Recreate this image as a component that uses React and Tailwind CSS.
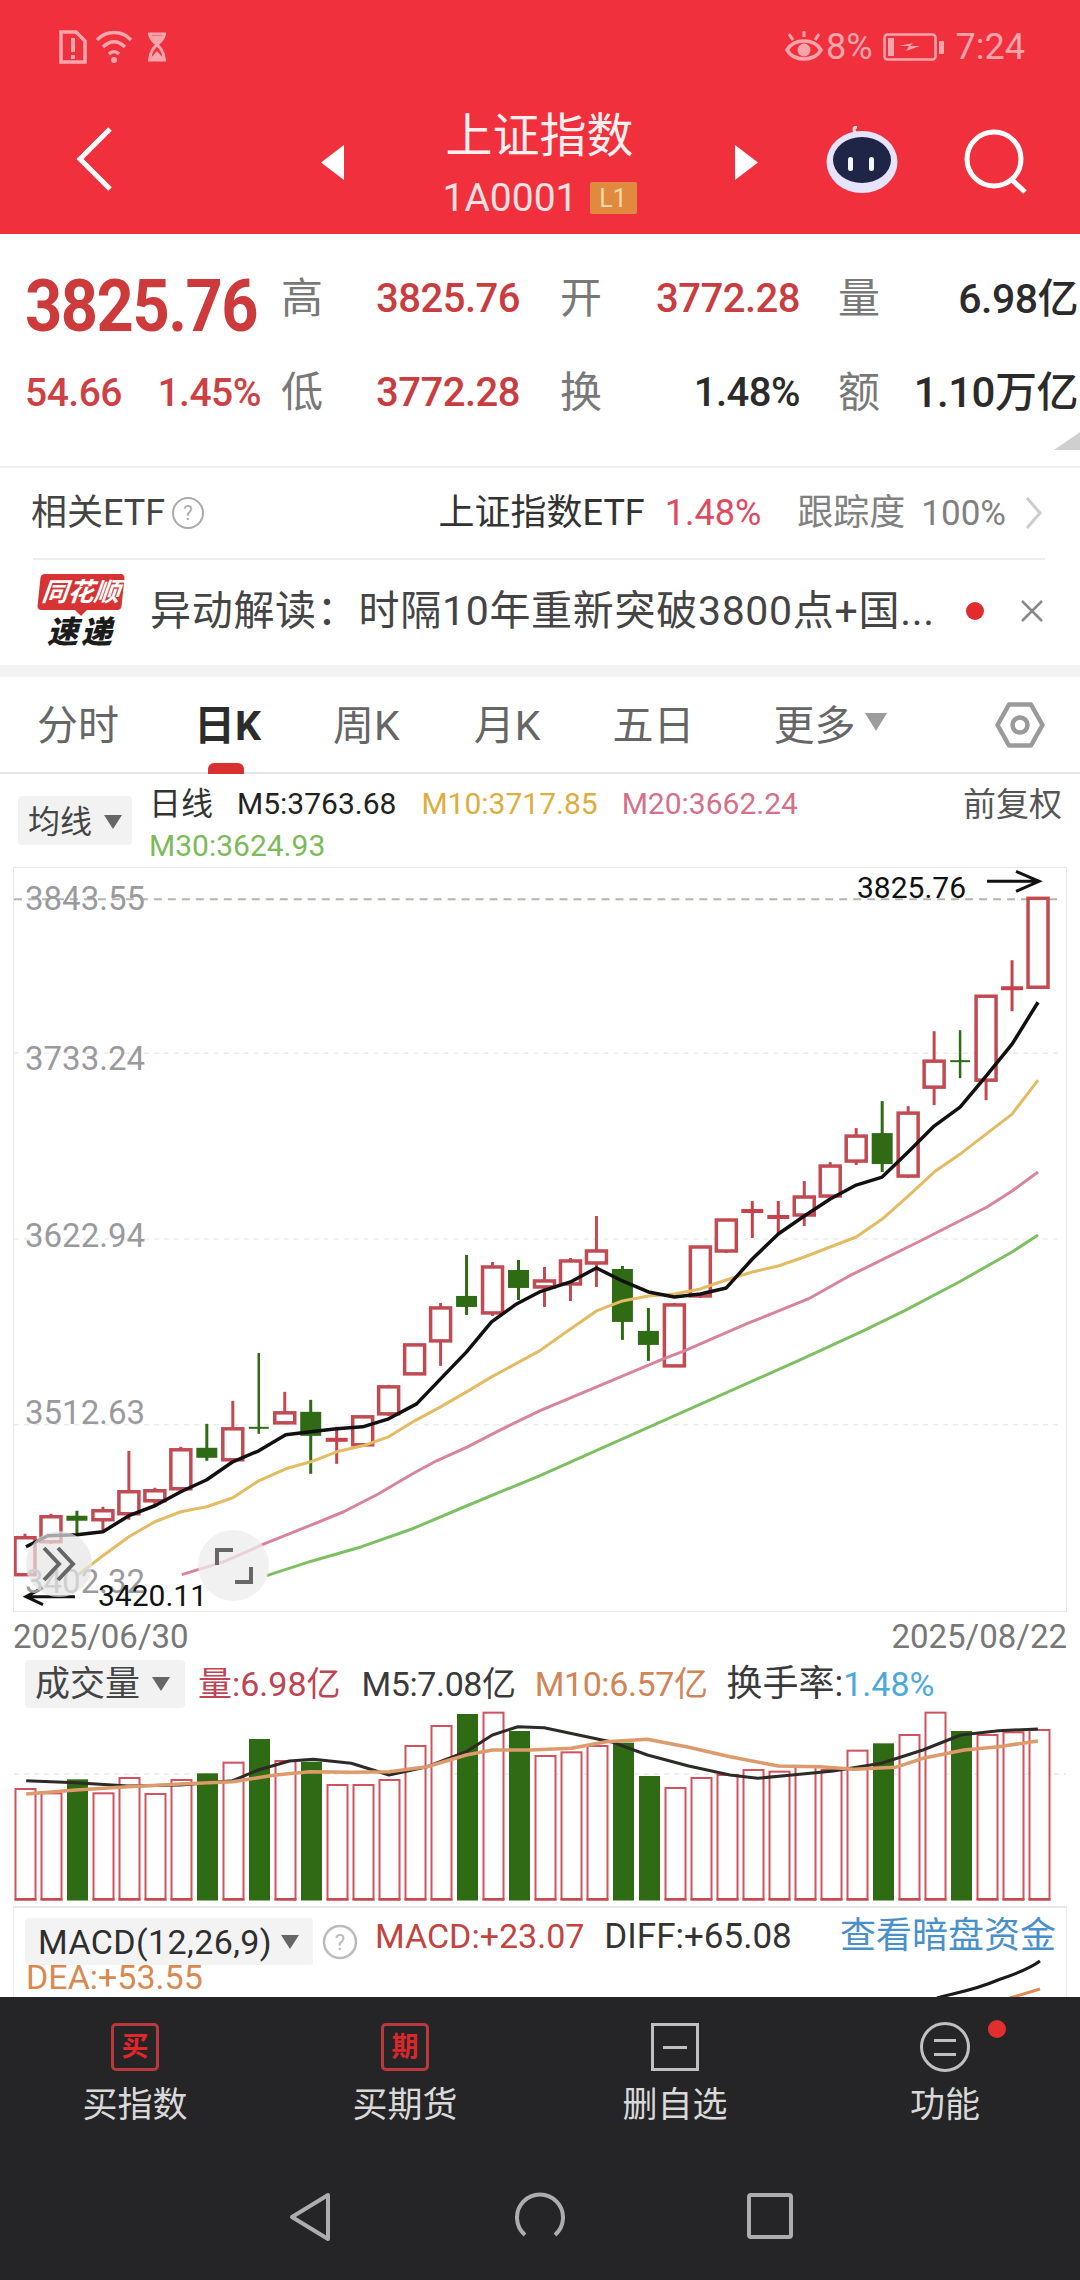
import React from "react";

const RED = "#c24a52";
const GREEN = "#2f6a14";

// [top, bottom, wickTop, wickBottom, type] r=red hollow, g=green solid, d=green doji, t=red thick doji
const candles = [
  [1539, 1576, 1535, 1576, "r"], [1518, 1543, 1515, 1545, "r"], [1517, 1522, 1512, 1535, "g"], [1512, 1521, 1508, 1533, "r"],
  [1493, 1515, 1452, 1521, "r"], [1492, 1502, 1489, 1508, "r"], [1451, 1490, 1448, 1492, "r"], [1449, 1459, 1425, 1462, "g"],
  [1430, 1461, 1402, 1461, "r"], [1429, 1429, 1354, 1435, "d"], [1414, 1424, 1393, 1424, "r"], [1413, 1437, 1401, 1475, "g"],
  [1441, 1441, 1428, 1465, "t"], [1418, 1446, 1418, 1446, "r"], [1388, 1415, 1386, 1417, "r"], [1346, 1375, 1346, 1375, "r"],
  [1309, 1342, 1304, 1367, "r"], [1297, 1308, 1256, 1316, "g"], [1268, 1314, 1263, 1317, "r"], [1271, 1289, 1261, 1301, "g"],
  [1282, 1288, 1268, 1308, "r"], [1262, 1285, 1259, 1302, "r"], [1252, 1264, 1217, 1288, "r"], [1270, 1323, 1267, 1341, "g"],
  [1332, 1346, 1309, 1362, "g"], [1306, 1367, 1304, 1367, "r"], [1248, 1297, 1248, 1299, "r"], [1221, 1252, 1221, 1254, "r"],
  [1212, 1212, 1202, 1239, "t"], [1218, 1218, 1202, 1234, "t"], [1198, 1216, 1182, 1227, "r"], [1167, 1197, 1163, 1197, "r"],
  [1137, 1162, 1129, 1166, "r"], [1134, 1165, 1102, 1173, "g"], [1114, 1177, 1107, 1179, "r"], [1062, 1088, 1032, 1106, "r"],
  [1062, 1062, 1031, 1079, "d"], [997, 1081, 996, 1101, "r"], [989, 989, 961, 1012, "t"], [899, 988, 899, 988, "r"],
];

const ma5 = "26,1548 48,1537 77,1536 103,1533 129,1517 155,1507 181,1493 207,1481 233,1463 259,1452 286,1436 311,1433 337,1430 363,1428 389,1420 417,1405 441,1380 467,1353 492,1323 517,1305 540,1293 571,1283 597,1269 623,1282 649,1293 675,1298 701,1295 727,1289 753,1260 779,1235 805,1217 831,1200 857,1186 883,1178 909,1153 935,1127 961,1108 987,1077 1013,1045 1039,1003";
const ma10 = "77,1577 103,1557 129,1538 155,1523 181,1513 207,1508 233,1499 259,1482 286,1470 311,1463 337,1453 363,1447 389,1438 415,1422 441,1408 467,1393 492,1378 540,1352 571,1330 597,1312 623,1302 649,1297 675,1295 701,1290 727,1281 753,1273 779,1267 805,1258 831,1248 857,1238 883,1220 909,1197 935,1173 961,1155 987,1135 1013,1115 1039,1081";
const ma20 = "182,1576 224,1563 265,1545 310,1527 344,1513 379,1495 413,1475 437,1462 468,1448 499,1432 540,1412 664,1360 685,1352 747,1325 809,1300 850,1277 919,1243 988,1208 1013,1192 1039,1173";
const ma30 = "267,1577 310,1563 362,1548 413,1530 465,1508 540,1477 803,1360 864,1332 905,1312 960,1283 1013,1253 1039,1236";

const volTops = [387, 400, 358, 400, 354, 402, 360, 340, 308, 237, 303, 305, 375, 375, 360, 258, 198, 162, 158, 213, 288, 277, 258, 248, 348, 384, 354, 345, 330, 335, 320, 330, 272, 250, 225, 158, 213, 225, 217, 210];
const volGreen = new Set([2, 7, 9, 11, 17, 19, 23, 24, 33, 36]);

const toVol = (arr) => arr.map(([x, y]) => `${(x / 1.452).toFixed(1)},${(y / 3 + 1660).toFixed(1)}`).join(" ");
const volM5 = toVol([[38,362],[110,368],[186,378],[262,375],[338,362],[375,330],[420,303],[455,298],[510,310],[565,345],[620,320],[677,275],[715,225],[752,200],[790,203],[840,225],[890,247],[940,285],[1000,318],[1060,345],[1100,355],[1150,345],[1210,333],[1280,310],[1340,270],[1395,225],[1450,212],[1507,207]]);
const volM10 = toVol([[38,402],[110,390],[186,380],[262,372],[338,365],[400,345],[450,335],[510,337],[565,335],[620,320],[677,285],[715,270],[770,270],[830,265],[880,245],[940,238],[1000,262],[1060,290],[1130,318],[1190,320],[1240,328],[1300,322],[1340,295],[1400,270],[1450,260],[1507,243]]);

function Candle({ c, i }) {
  const x = 25 + 26 * i;
  const [top, bottom, wt, wb, type] = c;
  const col = type === "g" || type === "d" ? GREEN : type === "t" ? "#c8404a" : RED;
  const ww = type === "d" ? 2.5 : 3;
  return (
    <g>
      <line x1={x} x2={x} y1={wt} y2={wb} stroke={col} strokeWidth={ww} />
      {type === "r" && <rect x={x - 10} y={top} width={20} height={bottom - top} fill="#fff" stroke={col} strokeWidth={3.5} />}
      {type === "g" && <rect x={x - 10.5} y={top} width={21} height={bottom - top} fill={col} />}
      {type === "d" && <line x1={x - 10} x2={x + 10} y1={top} y2={top} stroke={col} strokeWidth={2} />}
      {type === "t" && <line x1={x - 11} x2={x + 11} y1={top} y2={top} stroke={col} strokeWidth={4} />}
    </g>
  );
}

function KChart() {
  return (
    <svg className="absolute inset-0 w-full h-full" viewBox="14 870 1053 741">
      <line x1="14" x2="1062" y1="900" y2="900" stroke="#b5b5b0" strokeWidth="2" strokeDasharray="8 6" />
      {[1054, 1240, 1426].map((y) => (
        <line key={y} x1="14" x2="1062" y1={y} y2={y} stroke="#ebebeb" strokeWidth="1.5" strokeDasharray="5 5" />
      ))}
      {candles.map((c, i) => <Candle key={i} c={c} i={i} />)}
      <polyline points={ma30} fill="none" stroke="#7fbf63" strokeWidth="3" strokeLinejoin="round" />
      <polyline points={ma20} fill="none" stroke="#d8849a" strokeWidth="3" strokeLinejoin="round" />
      <polyline points={ma10} fill="none" stroke="#e3bb62" strokeWidth="3" strokeLinejoin="round" />
      <polyline points={ma5} fill="none" stroke="#111" strokeWidth="3.5" strokeLinejoin="round" />
      <path d="M988 882H1039M1017 872l23 10l-23 10" fill="none" stroke="#111" strokeWidth="3" />
      <path d="M75 1598H27M43 1589l-17 9l17 8" fill="none" stroke="#111" strokeWidth="3" />
    </svg>
  );
}

function VolChart() {
  return (
    <svg className="w-full h-full block" viewBox="0 1708 1080 198">
      <line x1="14" x2="1066" y1="1774" y2="1774" stroke="#e9e9e9" strokeWidth="1.5" strokeDasharray="5 5" />
      {volTops.map((t, i) => {
        const x = 25.5 + 26 * i;
        const top = t / 3 + 1660;
        return volGreen.has(i) ? (
          <rect key={i} x={x - 10.5} y={top} width={21} height={1900.5 - top} fill={GREEN} />
        ) : (
          <g key={i}>
            <rect x={x - 10} y={top} width={20} height={1899 - top} fill="#fff" stroke="#d0525e" strokeWidth="2" />
            <line x1={x - 11} x2={x + 11} y1="1899.5" y2="1899.5" stroke="#c44a52" strokeWidth="2.5" />
          </g>
        );
      })}
      <polyline points={volM5} fill="none" stroke="#2e2a26" strokeWidth="3" strokeLinejoin="round" />
      <polyline points={volM10} fill="none" stroke="#dd9a6a" strokeWidth="3.5" strokeLinejoin="round" />
    </svg>
  );
}

function Quad({ label, value, valueClass, pad }) {
  return (
    <div className={`flex items-center justify-between ${pad || ""}`}>
      <span className="text-[42px] leading-none text-[#787878]">{label}</span>
      <span className={`leading-none font-medium tracking-[-0.5px] ${valueClass}`}>{value}</span>
    </div>
  );
}

function Caret({ cls }) {
  return <span className={`inline-block w-0 h-0 border-x-[9px] border-x-transparent border-t-[14px] ${cls}`} />;
}

const PALE = "#f9a5ac";

export default function App() {
  return (
    <div className="w-[1080px] h-[2280px] bg-white overflow-hidden flex flex-col [font-family:Roboto,'Noto_Sans_CJK_SC',sans-serif]">
      {/* Header */}
      <div className="h-[234px] bg-[#f1303e] shrink-0 flex flex-col">
        <div className="h-[94px] flex items-center justify-between pl-[58px] pr-[55px] text-[#f9a5ac]">
          <div className="flex items-center">
            <svg width="30" height="36" viewBox="0 0 30 36" fill="none">
              <path d="M3 3h15l9 9v21H3z" stroke={PALE} strokeWidth="3.5" />
              <path d="M15 9v14M15 26v4" stroke={PALE} strokeWidth="4" />
            </svg>
            <svg className="ml-[6px]" width="42" height="36" viewBox="0 0 42 36" fill="none">
              <path d="M3 11C12 1 28 1 37 11M9 18c7-7 15-7 22 0M15 25c3-3 7-3 10 0" stroke={PALE} strokeWidth="3.5" />
              <circle cx="20" cy="31" r="3" fill={PALE} />
            </svg>
            <svg className="ml-[10px]" width="22" height="30" viewBox="0 0 22 30" fill="none">
              <path d="M2 2h18M2 28h18M4 3c0 8 14 10 14 24M18 3c0 8-14 10-14 24" stroke={PALE} strokeWidth="3" />
              <path d="M5 4h12l-6 9zM11 19l7 8H4z" fill={PALE} />
            </svg>
          </div>
          <div className="flex items-center">
            <svg width="38" height="32" viewBox="0 0 38 32" fill="none">
              <path d="M2 19C9 7 29 7 36 19C29 31 9 31 2 19z" stroke={PALE} strokeWidth="3.5" />
              <circle cx="19" cy="19" r="6.5" fill={PALE} />
              <path d="M8 9L4 3M19 6V0M30 9l4-6" stroke={PALE} strokeWidth="3" />
            </svg>
            <span className="ml-[3px] text-[36px] leading-none">8%</span>
            <svg className="ml-[10px]" width="62" height="28" viewBox="0 0 62 28" fill="none">
              <rect x="1.5" y="1.5" width="51" height="25" rx="3" stroke={PALE} strokeWidth="2.5" />
              <rect x="5" y="5" width="6" height="18" fill={PALE} />
              <path d="M16 13l14-3-3 3h10l-14 5 3-5z" fill={PALE} />
              <rect x="56" y="8" width="5" height="13" rx="1" fill={PALE} />
            </svg>
            <span className="ml-[11px] text-[36px] leading-none">7:24</span>
          </div>
        </div>
        <div className="h-[140px] flex items-start text-white">
          <div className="w-[44px] ml-[72px] mt-[32px]">
            <svg width="44" height="66" viewBox="0 0 44 66" fill="none">
              <path d="M38 3L8 33l30 30" stroke="#fff" strokeWidth="5" />
            </svg>
          </div>
          <svg className="ml-[205px] mt-[51px]" width="23" height="35" viewBox="0 0 23 35"><path d="M23 0v35L0 17.5z" fill="#fff" /></svg>
          <div className="w-[391px] flex flex-col items-center pt-[17px]">
            <div className="text-[47px] leading-[50px] text-[#fff0f0]">上证指数</div>
            <div className="mt-[20px] flex items-center h-[34px]">
              <span className="text-[39px] leading-none text-[#fde0e2]">1A0001</span>
              <span className="ml-[12px] w-[47px] h-[32px] bg-[#e0893f] rounded-[2px] flex items-center justify-center text-[25px] leading-none text-[#f8d9a8]">L1</span>
            </div>
          </div>
          <svg className="mt-[51px]" width="23" height="35" viewBox="0 0 23 35"><path d="M0 0v35L23 17.5z" fill="#fff" /></svg>
          <svg className="ml-[68px] mt-[32px]" width="72" height="68" viewBox="0 0 72 68" fill="none">
            <path d="M31 8c-4-3-4-7 0-7" stroke="#f8dfe2" strokeWidth="3" />
            <ellipse cx="36" cy="36" rx="35.5" ry="31" fill="#e6e3fa" />
            <ellipse cx="36" cy="34" rx="29" ry="23" fill="#1e2547" />
            <rect x="22" y="31" width="5" height="14" rx="2.5" fill="#f4f6ff" />
            <rect x="43" y="31" width="5" height="14" rx="2.5" fill="#f4f6ff" />
          </svg>
          <svg className="ml-[60px] mt-[30px]" width="72" height="70" viewBox="0 0 72 70" fill="none">
            <circle cx="36" cy="35" r="27" stroke="#fff" strokeWidth="5" />
            <path d="M52 54l15 14" stroke="#fff" strokeWidth="5" />
          </svg>
        </div>
      </div>

      {/* Quote */}
      <div className="h-[232px] shrink-0 relative pt-[18px]">
        <div className="grid grid-cols-[281px_239px_280px_280px] grid-rows-[94px_94px]">
          <div className="pl-[25px] pt-[24px] text-[65px] leading-[60px] font-bold text-[#cd3a3c] tracking-[-1.5px] whitespace-nowrap scale-y-110">3825.76</div>
          <Quad label="高" value="3825.76" valueClass="text-[40px] text-[#c93c40]" />
          <Quad label="开" value="3772.28" valueClass="text-[40px] text-[#c93c40]" pad="pl-[40px]" />
          <Quad label="量" value="6.98亿" valueClass="text-[41px] text-[#2b2b2b]" pad="pl-[38px] pr-[2px]" />
          <div className="pl-[25px] flex items-center justify-between pr-[20px] text-[39px] leading-none font-medium text-[#cd4044] tracking-[-0.5px]">
            <span>54.66</span><span>1.45%</span>
          </div>
          <Quad label="低" value="3772.28" valueClass="text-[40px] text-[#c93c40]" />
          <Quad label="换" value="1.48%" valueClass="text-[40px] text-[#2b2b2b]" pad="pl-[40px]" />
          <Quad label="额" value="1.10万亿" valueClass="text-[42px] text-[#2b2b2b]" pad="pl-[38px] pr-[2px]" />
        </div>
        <svg className="absolute right-0 bottom-[16px]" width="26" height="18" viewBox="0 0 26 18"><path d="M26 0v18H0z" fill="#cfcfcf" /></svg>
      </div>

      {/* ETF */}
      <div className="h-[92px] shrink-0 border-t-2 border-[#f0f0f0] flex items-center pl-[31px] pr-[37px] text-[36px] leading-none">
        <span className="text-[#444]">相关ETF</span>
        <svg className="ml-[6px]" width="34" height="34" viewBox="0 0 34 34" fill="none">
          <circle cx="17" cy="17" r="15" stroke="#aaa" strokeWidth="2" />
          <text x="17" y="24" textAnchor="middle" fontSize="20" fill="#aaa">?</text>
        </svg>
        <span className="ml-auto text-[#333]">上证指数ETF</span>
        <span className="ml-[20px] text-[#de4a60]">1.48%</span>
        <span className="ml-[36px] text-[#808080]">跟踪度</span>
        <span className="ml-[16px] text-[35px] text-[#808080]">100%</span>
        <svg className="ml-[19px]" width="18" height="34" viewBox="0 0 18 34" fill="none"><path d="M2 2l13 15L2 32" stroke="#ccc" strokeWidth="3" /></svg>
      </div>

      {/* News */}
      <div className="h-[107px] shrink-0 relative flex items-center pl-[37px] pr-[37px]">
        <div className="absolute left-[33px] right-[35px] top-0 h-[2px] bg-[#eeeeee]" />
        <div className="w-[88px] h-[74px] flex flex-col items-center relative mt-[-2px]">
          <div className="w-[84px] h-[36px] bg-[#d73333] rounded-[4px] -skew-x-6 flex items-center justify-center text-white font-bold italic text-[26px] leading-none whitespace-nowrap">同花顺</div>
          <span className="w-0 h-0 border-x-[6px] border-x-transparent border-t-[6px] border-t-[#d73333]" />
          <div className="mt-[1px] text-[31px] leading-[31px] font-black italic text-[#1c1c1c] tracking-[3px] whitespace-nowrap">速递</div>
        </div>
        <span className="ml-[25px] text-[41px] leading-none text-[#444] whitespace-nowrap tracking-[0.7px]">{"异动解读\uFF1A时隔10年重新突破3800点+国..."}</span>
        <span className="absolute left-[966px] top-[44px] w-[18px] h-[18px] rounded-full bg-[#e12b2e]" />
        <svg className="absolute left-[1020px] top-[41px]" width="24" height="24" viewBox="0 0 24 24" fill="none"><path d="M2 2l20 20M22 2L2 22" stroke="#888" strokeWidth="2.5" /></svg>
      </div>
      <div className="h-[12px] shrink-0 bg-[#f3f3f4]" />

      {/* Tabs */}
      <div className="h-[97px] shrink-0 relative border-b-2 border-[#e6e6e6] flex items-center pl-[37px] pt-[4px] text-[41px] leading-none text-[#666]">
        <span>分时</span>
        <span className="ml-[75px] font-bold text-[#2c2c2c]">日K</span>
        <span className="ml-[72px]">周K</span>
        <span className="ml-[74px]">月K</span>
        <span className="ml-[72px]">五日</span>
        <span className="ml-[79px]">更多</span>
        <Caret cls="ml-[9px] mb-[10px] border-t-[#9c9c9c] border-x-[11px] border-t-[18px]" />
        <svg className="absolute left-[995px] top-[25px]" width="50" height="46" viewBox="0 0 50 46" fill="none">
          <path d="M14 2.5h22L47.5 23 36 43.5H14L2.5 23z" stroke="#9a9a9a" strokeWidth="4.5" strokeLinejoin="round" />
          <circle cx="25" cy="23" r="7.5" stroke="#9a9a9a" strokeWidth="4.5" />
        </svg>
        <div className="absolute left-[208px] bottom-[-2px] w-[36px] h-[11px] bg-[#d8312f] rounded-t-[6px]" />
      </div>

      {/* MA legend */}
      <div className="h-[93px] shrink-0 relative flex text-[32px] leading-none">
        <div className="ml-[18px] mt-[22px] w-[114px] h-[49px] bg-[#f2f2f2] rounded-[4px] flex items-center pl-[10px] pt-[2px]">
          <span className="text-[#444]">均线</span>
          <Caret cls="ml-[12px] border-t-[#666]" />
        </div>
        <div className="ml-[17px] flex-1 pt-[12px] pr-[18px]">
          <div className="flex items-center h-[36px]">
            <span className="text-[#333]">日线</span>
            <span className="ml-[24px] text-[#222] text-[30px]">M5:3763.68</span>
            <span className="ml-[25px] text-[#dcae3c] text-[30px]">M10:3717.85</span>
            <span className="ml-[24px] text-[#d4708a] text-[30px]">M20:3662.24</span>
            <span className="ml-auto text-[33px] text-[#555]">前复权</span>
          </div>
          <div className="mt-[6px] h-[36px] text-[30px] text-[#7cba5a] flex items-center">M30:3624.93</div>
        </div>
      </div>

      {/* K chart */}
      <div className="h-[745px] shrink-0 mx-[13px] relative border border-[#e8e8e8] overflow-hidden">
        <KChart />
        <span className="absolute left-[11px] top-[14px] text-[33px] leading-none text-[#9a9a9e]">3843.55</span>
        <span className="absolute left-[11px] top-[174px] text-[33px] leading-none text-[#9a9a9e]">3733.24</span>
        <span className="absolute left-[11px] top-[351px] text-[33px] leading-none text-[#9a9a9e]">3622.94</span>
        <span className="absolute left-[11px] top-[528px] text-[33px] leading-none text-[#9a9a9e]">3512.63</span>
        <span className="absolute left-[11px] top-[697px] text-[33px] leading-none text-[#9a9a9e]">3402.32</span>
        <span className="absolute left-[843px] top-[5px] text-[30px] leading-[30px] text-[#111]">3825.76</span>
        <span className="absolute left-[84px] top-[715px] text-[30px] leading-[26px] text-[#111]">3420.11</span>
        <div className="absolute left-[12px] top-[663px] w-[66px] h-[66px] rounded-full bg-[#e6e6e6]/70 flex items-center justify-center">
          <svg width="36" height="36" viewBox="0 0 36 36" fill="none"><path d="M3 2l15 16L3 34M17 2l15 16-15 16" stroke="#666" strokeWidth="4" /></svg>
        </div>
        <div className="absolute left-[184px] top-[662px] w-[71px] h-[71px] rounded-full bg-[#ececec]/75 flex items-center justify-center">
          <svg width="38" height="36" viewBox="0 0 38 36" fill="none"><path d="M2 17V2h16M36 19v15H20" stroke="#666" strokeWidth="4" /></svg>
        </div>
      </div>

      {/* Date row */}
      <div className="h-[48px] shrink-0 px-[13px] flex items-center justify-between text-[33px] leading-none text-[#777]">
        <span>2025/06/30</span><span>2025/08/22</span>
      </div>

      {/* Volume */}
      <div className="h-[248px] shrink-0 flex flex-col">
        <div className="h-[48px] flex items-center text-[34px] leading-none shrink-0">
          <div className="ml-[25px] w-[160px] h-[48px] bg-[#f2f2f2] rounded-[4px] flex items-center pl-[10px]">
            <span className="text-[#444] text-[35px]">成交量</span>
            <Caret cls="ml-[12px] border-t-[#666]" />
          </div>
          <span className="ml-[13px] text-[#bf4352]">量:6.98亿</span>
          <span className="ml-[21px] text-[#3a3a3a] tracking-[-0.4px]">M5:7.08亿</span>
          <span className="ml-[19px] text-[#d18455] tracking-[-0.4px]">M10:6.57亿</span>
          <span className="ml-[19px] text-[36px] text-[#3a3a3a]">换手率:</span>
          <span className="text-[#4aa8dc]">1.48%</span>
        </div>
        <div className="h-[198px] shrink-0"><VolChart /></div>
        <div className="h-[2px] mx-[13px] bg-[#e8e8e8] shrink-0" />
      </div>

      {/* MACD */}
      <div className="h-[89px] shrink-0 relative overflow-hidden mx-[13px] border-x border-[#ececec]">
        <div className="absolute left-[11px] top-[10px] w-[288px] h-[47px] bg-[#f3f3f4] rounded-[4px] flex items-center pl-[13px]">
          <span className="text-[34px] leading-none text-[#2e2e2e] whitespace-nowrap tracking-[0.4px]">MACD(12,26,9)</span>
          <Caret cls="ml-[9px] border-t-[#666]" />
        </div>
        <svg className="absolute left-[308px] top-[16px]" width="36" height="36" viewBox="0 0 36 36" fill="none">
          <circle cx="18" cy="18" r="16" stroke="#bbb" strokeWidth="2.5" />
          <text x="18" y="26" textAnchor="middle" fontSize="22" fill="#bbb">?</text>
        </svg>
        <div className="absolute left-[361px] top-[10px] flex items-center h-[36px] text-[34px] leading-none whitespace-nowrap">
          <span className="text-[#c2433f]">MACD:+23.07</span>
          <span className="ml-[20px] text-[35px] text-[#333]">DIFF:+65.08</span>
        </div>
        <span className="absolute left-[826px] top-[10px] text-[36px] leading-[36px] text-[#4a90c8] whitespace-nowrap">查看暗盘资金</span>
        <span className="absolute left-[12px] top-[52px] text-[34px] leading-[34px] text-[#d9884f] whitespace-nowrap">DEA:+53.55</span>
        <svg className="absolute left-[909px] top-[49px]" width="140" height="40" viewBox="923 1957 140 40" fill="none">
          <path d="M937 1998C955 1993 975 1990 998 1980C1012 1975 1028 1970 1040 1961" stroke="#1a1a1a" strokeWidth="3" />
          <path d="M1010 1998l30-9" stroke="#e08a55" strokeWidth="3" />
        </svg>
      </div>

      {/* Bottom */}
      <div className="flex-1 bg-[#252426] flex flex-col">
        <div className="grid grid-cols-4 pt-[26px]">
          <div className="flex flex-col items-center">
            <div className="w-[48px] h-[48px] rounded-[5px] border-[3px] border-[#b93a3c] flex items-center justify-center text-[27px] leading-none font-bold text-[#e0282c]">买</div>
            <span className="mt-[17px] text-[35px] leading-none text-[#d9d9d9]">买指数</span>
          </div>
          <div className="flex flex-col items-center">
            <div className="w-[48px] h-[48px] rounded-[5px] border-[3px] border-[#b93a3c] flex items-center justify-center text-[27px] leading-none font-bold text-[#d8282c]">期</div>
            <span className="mt-[17px] text-[35px] leading-none text-[#d9d9d9]">买期货</span>
          </div>
          <div className="flex flex-col items-center">
            <div className="w-[48px] h-[48px] border-[3px] border-[#c0c0c0] flex items-center justify-center">
              <div className="w-[24px] h-[3px] bg-[#c0c0c0]" />
            </div>
            <span className="mt-[17px] text-[35px] leading-none text-[#d9d9d9]">删自选</span>
          </div>
          <div className="flex flex-col items-center relative">
            <div className="w-[50px] h-[50px] rounded-full border-[3px] border-[#c0c0c0] flex flex-col items-center justify-center gap-[11px] mt-[-1px]">
              <div className="w-[22px] h-[3px] bg-[#c0c0c0]" />
              <div className="w-[22px] h-[3px] bg-[#c0c0c0]" />
            </div>
            <span className="absolute left-[178px] top-[-3px] w-[18px] h-[18px] rounded-full bg-[#e12f2f]" />
            <span className="mt-[16px] text-[35px] leading-none text-[#d9d9d9]">功能</span>
          </div>
        </div>
        <div className="flex items-start pl-[284px] mt-[68px]">
          <svg width="50" height="52" viewBox="0 0 50 52" fill="none">
            <path d="M44 4v44L8 26z" stroke="#adadad" strokeWidth="4" strokeLinejoin="round" />
          </svg>
          <svg className="ml-[181px]" width="50" height="52" viewBox="0 0 50 52" fill="none">
            <path d="M10 44a23 23 0 1 1 30 0" stroke="#adadad" strokeWidth="4" />
          </svg>
          <svg className="ml-[180px]" width="50" height="50" viewBox="0 0 50 50" fill="none">
            <rect x="4" y="4" width="42" height="42" rx="2" stroke="#adadad" strokeWidth="4" />
          </svg>
        </div>
      </div>
    </div>
  );
}
